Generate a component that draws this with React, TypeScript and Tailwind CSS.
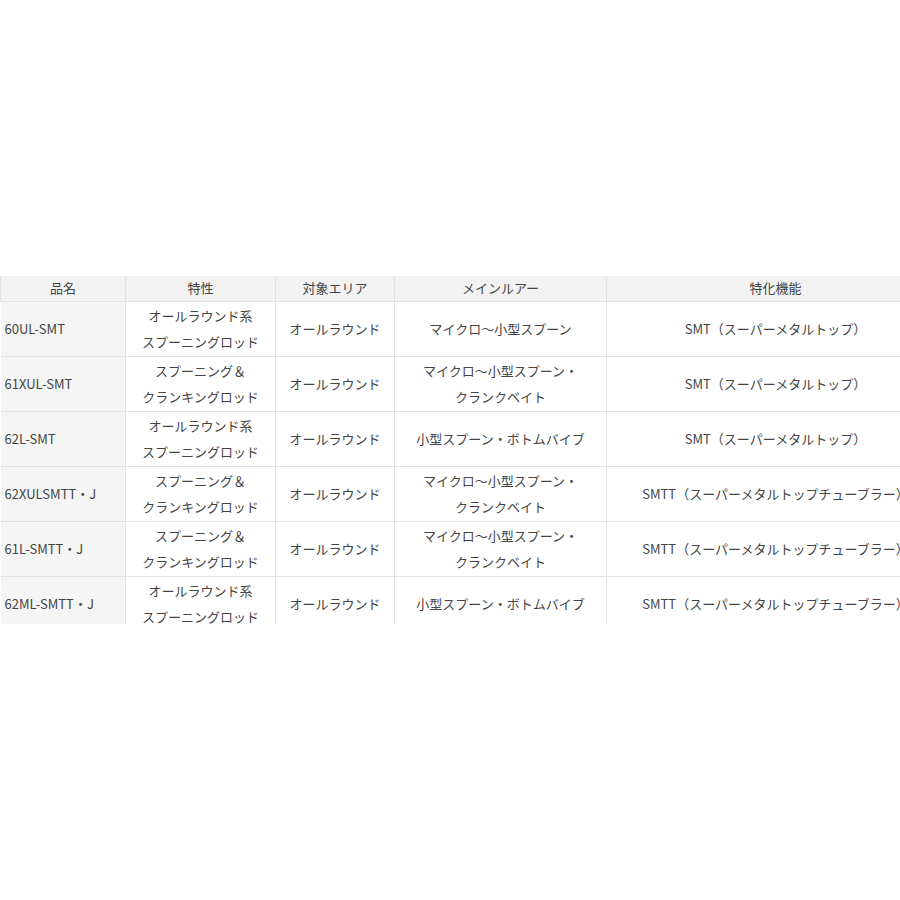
const rows = [
  {
    name: "60UL-SMT",
    trait: ["オールラウンド系", "スプーニングロッド"],
    area: "オールラウンド",
    lure: ["マイクロ～小型スプーン"],
    feature: "SMT（スーパーメタルトップ）",
  },
  {
    name: "61XUL-SMT",
    trait: ["スプーニング＆", "クランキングロッド"],
    area: "オールラウンド",
    lure: ["マイクロ～小型スプーン・", "クランクベイト"],
    feature: "SMT（スーパーメタルトップ）",
  },
  {
    name: "62L-SMT",
    trait: ["オールラウンド系", "スプーニングロッド"],
    area: "オールラウンド",
    lure: ["小型スプーン・ボトムバイブ"],
    feature: "SMT（スーパーメタルトップ）",
  },
  {
    name: "62XULSMTT・J",
    trait: ["スプーニング＆", "クランキングロッド"],
    area: "オールラウンド",
    lure: ["マイクロ～小型スプーン・", "クランクベイト"],
    feature: "SMTT（スーパーメタルトップチューブラー）",
  },
  {
    name: "61L-SMTT・J",
    trait: ["スプーニング＆", "クランキングロッド"],
    area: "オールラウンド",
    lure: ["マイクロ～小型スプーン・", "クランクベイト"],
    feature: "SMTT（スーパーメタルトップチューブラー）",
  },
  {
    name: "62ML-SMTT・J",
    trait: ["オールラウンド系", "スプーニングロッド"],
    area: "オールラウンド",
    lure: ["小型スプーン・ボトムバイブ"],
    feature: "SMTT（スーパーメタルトップチューブラー）",
  },
];

const headers = ["品名", "特性", "対象エリア", "メインルアー", "特化機能"];

function Lines({ lines }: { lines: string[] }) {
  return (
    <>
      {lines.map((line, index) => (
        <div key={index}>{line}</div>
      ))}
    </>
  );
}

export default function App() {
  return (
    <div
      className="min-h-[900px] w-[900px] overflow-hidden bg-white pt-[276px] text-[13px] text-[#444]"
      style={{ fontFamily: '"Noto Sans CJK JP", "Noto Sans", sans-serif' }}
    >
      {/* the table is wider than the page and cut at the bottom, as in the source */}
      <div className="h-[348px] w-[900px] overflow-hidden">
        <table className="w-[944px] table-fixed border-collapse">
          <colgroup>
            <col className="w-[125px]" />
            <col className="w-[150px]" />
            <col className="w-[119px]" />
            <col className="w-[212px]" />
            <col className="w-[338px]" />
          </colgroup>
          <thead>
            <tr className="h-[25px] bg-[#f2f2f2]">
              {headers.map((header) => (
                <th
                  key={header}
                  className="border border-t-0 border-[#e2e2e2] p-0 text-center font-normal leading-[24px]"
                >
                  {header}
                </th>
              ))}
            </tr>
          </thead>
          <tbody>
            {rows.map((row) => (
              <tr key={row.name} className="h-[55px]">
                <td className="border border-l-0 border-[#e2e2e2] bg-[#f5f5f5] py-0 pl-[4px] text-left leading-[26px]">
                  {row.name}
                </td>
                <td className="border border-[#e2e2e2] p-0 text-center leading-[26px]">
                  <Lines lines={row.trait} />
                </td>
                <td className="border border-[#e2e2e2] p-0 text-center leading-[26px]">
                  {row.area}
                </td>
                <td className="border border-[#e2e2e2] p-0 text-center leading-[26px]">
                  <Lines lines={row.lure} />
                </td>
                <td className="border border-[#e2e2e2] p-0 text-center leading-[26px]">
                  {row.feature}
                </td>
              </tr>
            ))}
          </tbody>
        </table>
      </div>
    </div>
  );
}
